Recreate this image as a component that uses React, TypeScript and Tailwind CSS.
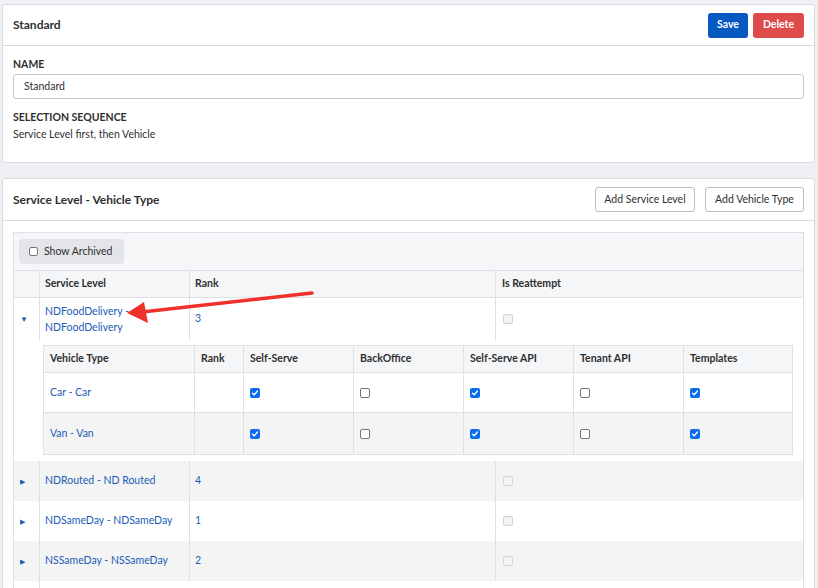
import React from 'react';

const Check: React.FC<{ on?: boolean; disabled?: boolean }> = ({ on, disabled }) => {
  if (disabled) return <span className="block w-[10px] h-[10px] rounded-[2px] border border-[#d4d4d4] bg-[#f4f4f4]"></span>;
  if (on)
    return (
      <span className="flex w-[10px] h-[10px] rounded-[2px] bg-[#0b6cf0] items-center justify-center">
        <svg width="8" height="8" viewBox="0 0 8 8"><path d="M1.5 4.2 3.2 5.8 6.5 2" fill="none" stroke="white" strokeWidth="1.4" strokeLinecap="round" strokeLinejoin="round" /></svg>
      </span>
    );
  return <span className="block w-[10px] h-[10px] rounded-[2px] border border-[#767676] bg-white"></span>;
};

const vehicles = [
  { name: 'Car - Car', flags: [true, false, true, false, true] },
  { name: 'Van - Van', flags: [true, false, true, false, true] },
];

const levels = [
  { name: 'NDRouted - ND Routed', rank: '4' },
  { name: 'NDSameDay - NDSameDay', rank: '1' },
  { name: 'NSSameDay - NSSameDay', rank: '2' },
];

const flagCols = ['Self-Serve', 'BackOffice', 'Self-Serve API', 'Tenant API', 'Templates'];

export default function App() {
  return (
    <div className="relative min-h-screen bg-[#eef0f3] pl-[2px] pr-[3px] pt-[4px] font-['Lato',sans-serif] text-[10.5px] text-[#2f2f2f]">
      {/* Header card */}
      <div className="bg-white border border-[#d8dbdf] rounded-[3px]">
        <div className="h-[41px] flex items-center justify-between pl-[10px] pr-[10px] border-b border-[#d8dbdf]">
          <span className="font-bold text-[12px]">Standard</span>
          <div className="flex gap-[5px]">
            <button className="h-[25px] w-[40px] rounded-[3px] bg-[#0559c1] text-white font-bold text-[10.5px]">Save</button>
            <button className="h-[25px] w-[51px] rounded-[3px] bg-[#dd4b4b] text-white font-bold text-[10.5px]">Delete</button>
          </div>
        </div>
        <div className="px-[10px] pt-[12px] pb-[22px]">
          <div className="font-bold leading-[12px] text-[10.5px]">NAME</div>
          <div className="mt-[4px] h-[25px] border border-[#c4c7cb] rounded-[3px] flex items-center px-[10px]">Standard</div>
          <div className="mt-[12px] font-bold leading-[12px]">SELECTION SEQUENCE</div>
          <div className="mt-[5px] leading-[12px]">Service Level first, then Vehicle</div>
        </div>
      </div>

      {/* Service level card */}
      <div className="mt-[15px] bg-white border border-[#d8dbdf] rounded-[3px]">
        <div className="h-[42px] flex items-center justify-between pl-[10px] pr-[10px] border-b border-[#d8dbdf]">
          <span className="font-bold text-[12px]">Service Level - Vehicle Type</span>
          <div className="flex gap-[10px]">
            <button className="h-[25px] w-[100px] rounded-[3px] border border-[#b9bcc0] bg-white text-[10.5px]">Add Service Level</button>
            <button className="h-[25px] w-[99px] rounded-[3px] border border-[#b9bcc0] bg-white text-[10.5px]">Add Vehicle Type</button>
          </div>
        </div>
        <div className="px-[10px] pt-[11px] h-[370px] overflow-hidden">
          <div className="border border-[#dde0e4]">
            <div className="h-[38px] bg-[#f5f6f8] flex items-center px-[5px] border-b border-[#dde0e4]">
              <div className="h-[25px] w-[105px] rounded-[4px] bg-[#e3e5e8] flex items-center pl-[10px] gap-[6px]">
                <span className="block w-[9px] h-[9px] rounded-[2px] border border-[#767676] bg-white"></span>
                <span className="text-[10.5px]">Show Archived</span>
              </div>
            </div>
            {/* header */}
            <div className="h-[27px] bg-[#f5f6f8] flex font-bold border-b border-[#dde0e4]">
              <div className="w-[25px]"></div>
              <div className="w-[150px] border-l border-[#dde0e4] flex items-center pl-[5px]">Service Level</div>
              <div className="w-[306px] border-l border-[#dde0e4] flex items-center pl-[5px]">Rank</div>
              <div className="flex-1 border-l border-[#dde0e4] flex items-center pl-[6px]">Is Reattempt</div>
            </div>
            {/* expanded row */}
            <div className="flex">
              <div className="w-[25px] flex items-center pl-[6px] text-[#1a5db5] text-[8px]">▼</div>
              <div className="w-[150px] border-l border-[#dde0e4] pl-[5px] py-[5px] leading-[16px] text-[#1a5db5]">
                NDFoodDelivery -<br />NDFoodDelivery
              </div>
              <div className="w-[306px] border-l border-[#dde0e4] flex items-center pl-[5px] text-[#1a5db5]">3</div>
              <div className="flex-1 border-l border-[#dde0e4] flex items-center pl-[7px]"><Check disabled /></div>
            </div>
            <div className="pl-[29px] pr-[10px] pt-[5px] pb-[6px]">
              <div className="border border-[#dde0e4]">
                <div className="h-[27px] bg-[#f5f6f8] flex font-bold border-b border-[#dde0e4]">
                  <div className="w-[150px] flex items-center pl-[6px]">Vehicle Type</div>
                  <div className="w-[49px] border-l border-[#dde0e4] flex items-center pl-[6px]">Rank</div>
                  {flagCols.map((c, i) => (
                    <div key={c} className={`${i === 4 ? 'flex-1' : 'w-[110px]'} border-l border-[#dde0e4] flex items-center pl-[6px]`}>{c}</div>
                  ))}
                </div>
                {vehicles.map((v, r) => (
                  <div key={v.name} className={`flex ${r === 1 ? 'bg-[#f4f4f4] h-[41px]' : 'bg-white border-b border-[#dde0e4] h-[40px]'}`}>
                    <div className="w-[150px] flex items-center pl-[6px] text-[#1a5db5]">{v.name}</div>
                    <div className="w-[49px] border-l border-[#dde0e4]"></div>
                    {v.flags.map((f, i) => (
                      <div key={i} className={`${i === 4 ? 'flex-1' : 'w-[110px]'} border-l border-[#dde0e4] flex items-center pl-[6px]`}>
                        <Check on={f} />
                      </div>
                    ))}
                  </div>
                ))}
              </div>
            </div>
            {levels.map((l, r) => (
              <div key={l.name} className={`h-[40px] flex ${r % 2 === 0 ? 'bg-[#f4f4f4]' : 'bg-white'}`}>
                <div className="w-[25px] flex items-center pl-[6px] text-[#1a5db5] text-[7px]">▶</div>
                <div className="w-[150px] border-l border-[#dde0e4] flex items-center pl-[5px] text-[#1a5db5]">{l.name}</div>
                <div className="w-[306px] border-l border-[#dde0e4] flex items-center pl-[5px] text-[#1a5db5]">{l.rank}</div>
                <div className="flex-1 border-l border-[#dde0e4] flex items-center pl-[7px]"><Check disabled /></div>
              </div>
            ))}
            <div className="h-[20px] flex">
              <div className="w-[25px]"></div>
              <div className="w-[150px] border-l border-[#dde0e4]"></div>
            </div>
          </div>
        </div>
      </div>

      {/* annotation arrow */}
      <svg className="absolute left-0 top-0 pointer-events-none" width="818" height="588">
        <line x1="312" y1="293" x2="142" y2="312" stroke="#f0302a" strokeWidth="3.5" strokeLinecap="round" />
        <polygon points="127,313 144,302 148,323" fill="#f0302a" />
      </svg>
    </div>
  );
}
